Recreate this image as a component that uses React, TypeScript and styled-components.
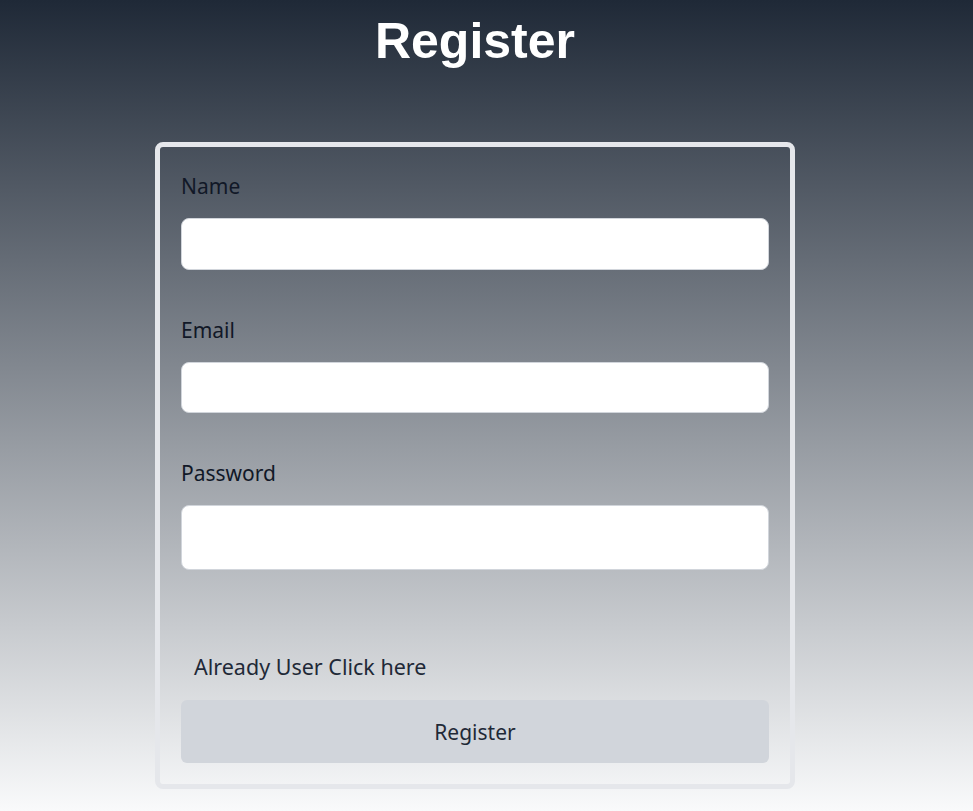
import React from "react";
import styled, { createGlobalStyle } from "styled-components";

const GlobalStyle = createGlobalStyle`
  html, body {
    margin: 0;
    padding: 0;
  }
  body {
    min-height: 100vh;
    background: linear-gradient(to bottom, #1f2937 0%, #f9fafb 100%);
    background-attachment: fixed;
    font-family: "Noto Sans", "Open Sans", sans-serif;
  }
`;

const Page = styled.main`
  min-height: 100vh;
  display: flex;
  flex-direction: column;
  align-items: center;
  box-sizing: border-box;
  padding: 12px 23px 0 0;
`;

const Title = styled.h1`
  margin: 0;
  font-family: "Liberation Sans", Arial, sans-serif;
  font-weight: 700;
  font-size: 50px;
  line-height: 58px;
  color: #ffffff;
`;

const Card = styled.form`
  margin-top: 72px;
  width: 640px;
  box-sizing: border-box;
  border: 5px solid #e5e7eb;
  border-radius: 8px;
  padding: 25px 21px 21px;
  display: flex;
  flex-direction: column;
`;

const Field = styled.div<{ $first?: boolean }>`
  display: flex;
  flex-direction: column;
  gap: 18px;
  margin-top: ${(p) => (p.$first ? "0" : "46px")};
`;

const Label = styled.label`
  font-size: 21px;
  line-height: 28px;
  color: #111827;
`;

const Input = styled.input<{ $h: number }>`
  box-sizing: border-box;
  width: 100%;
  height: ${(p) => p.$h}px;
  border: 1px solid #d1d5db;
  border-radius: 8px;
  background: #ffffff;
  outline: none;
  font-size: 18px;
  padding: 0 12px;
`;

const LoginLink = styled.a`
  margin-top: 83px;
  padding-left: 13px;
  font-size: 21.5px;
  line-height: 28px;
  color: #1f2937;
  text-decoration: none;
  cursor: pointer;
`;

const SubmitButton = styled.button`
  margin-top: 19px;
  height: 63px;
  width: 100%;
  border: none;
  border-radius: 6px;
  background: #d1d5db;
  color: #1f2937;
  font-family: "Noto Sans", "Open Sans", sans-serif;
  font-size: 21px;
  cursor: pointer;
`;

export default function App() {
  return (
    <>
      <GlobalStyle />
      <Page>
        <Title>Register</Title>
        <Card onSubmit={(e) => e.preventDefault()}>
          <Field $first>
            <Label htmlFor="name">Name</Label>
            <Input id="name" type="text" $h={52} />
          </Field>
          <Field>
            <Label htmlFor="email">Email</Label>
            <Input id="email" type="email" $h={51} />
          </Field>
          <Field>
            <Label htmlFor="password">Password</Label>
            <Input id="password" type="password" $h={65} />
          </Field>
          <LoginLink>Already User Click here</LoginLink>
          <SubmitButton type="submit">Register</SubmitButton>
        </Card>
      </Page>
    </>
  );
}
